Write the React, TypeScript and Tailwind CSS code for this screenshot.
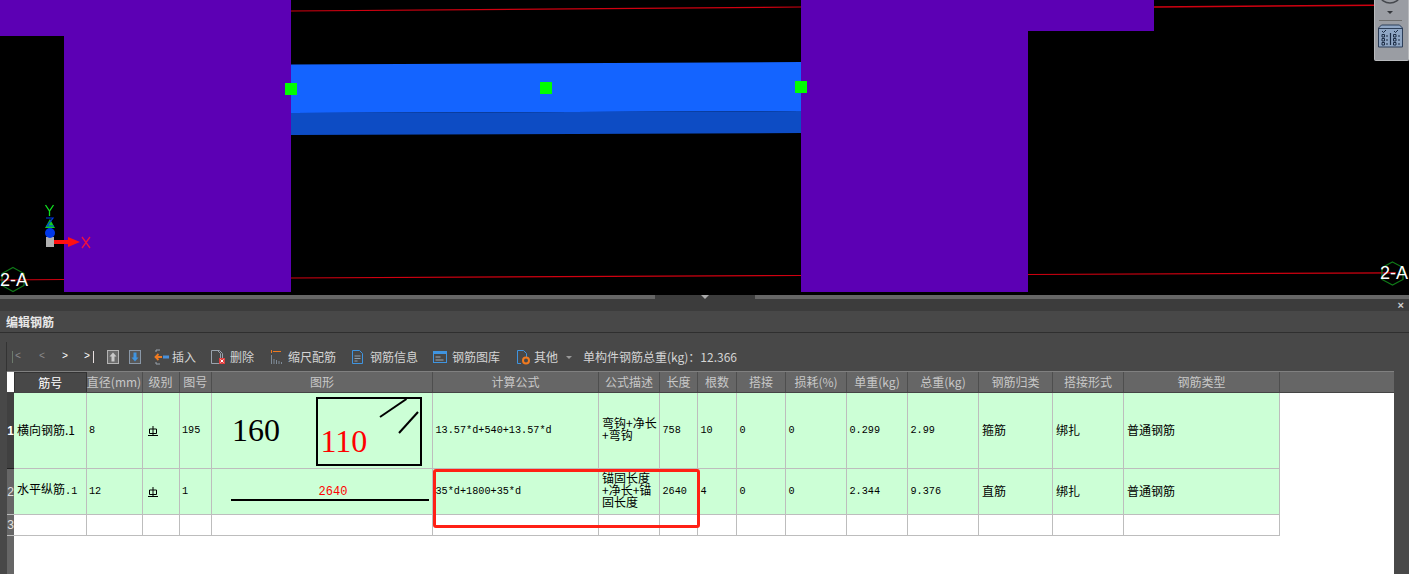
import React from 'react';

const CJK = '[font-family:"Noto_Sans_CJK_SC","Liberation_Sans",sans-serif]';
const GRID =
  'grid grid-cols-[72.5px_56px_37px_32.5px_221px_166px_61px_38px_39px_49px_61px_61px_71px_74px_71px_156px]';

const HEADERS = [
  '筋号', '直径(mm)', '级别', '图号', '图形', '计算公式', '公式描述', '长度', '根数',
  '搭接', '损耗(%)', '单重(kg)', '总重(kg)', '钢筋归类', '搭接形式', '钢筋类型',
];

function Viewport() {
  return (
    <div className="relative h-[295px] shrink-0 bg-black overflow-hidden">
      <svg width="1409" height="295" className="absolute inset-0">
        <line x1="291" y1="11" x2="801" y2="7" stroke="#d00010" strokeWidth="1.2" />
        <line x1="1154" y1="7" x2="1374" y2="5.300" stroke="#d00010" strokeWidth="1.5" />
        <line x1="0" y1="280" x2="64" y2="279.500" stroke="#d00010" strokeWidth="1.2" />
        <line x1="291" y1="278" x2="801" y2="275.500" stroke="#d00010" strokeWidth="1.2" />
        <line x1="1028" y1="274.500" x2="1396" y2="272.800" stroke="#d00010" strokeWidth="1.2" />
        <rect x="0" y="0" width="64" height="36" fill="#5c00b4" />
        <rect x="64" y="0" width="227" height="292" fill="#5c00b4" />
        <rect x="801" y="0" width="227" height="292" fill="#5c00b4" />
        <rect x="1028" y="0" width="126" height="31" fill="#5c00b4" />
        <polygon points="291,64.500 801,62 801,111 291,113" fill="#1464ff" />
        <polygon points="291,113 801,111 801,133 291,135" fill="#0d4cc4" />
        <rect x="285" y="83" width="12" height="12" fill="#00ff00" />
        <rect x="540" y="82" width="12" height="12" fill="#00ff00" />
        <rect x="795" y="81" width="12" height="12" fill="#00ff00" />
        {/* axis marker */}
        <rect x="46" y="237" width="8" height="10" fill="#b0b0b0" />
        <polygon points="50,219 55,228 45,228" fill="#10d020" />
        <circle cx="50" cy="233" r="5" fill="#0038e8" />
        <path d="M46 218h7l-6 8h7" fill="none" stroke="#0038e8" strokeWidth="1.2" />
        <path d="M45.500 205l4 6 4-6M49.500 211v5" fill="none" stroke="#10e020" strokeWidth="1.3" />
        <rect x="54" y="240" width="14" height="4" fill="#ff1010" />
        <polygon points="68,237 80,242 68,247" fill="#ff1010" />
        <path d="M82 237l8 11M90 237l-8 11" fill="none" stroke="#f01040" strokeWidth="1.3" />
        {/* grid bubbles */}
        <polygon points="13,267.500 24,273.500 24,285.500 13,291.500 2,285.500 2,273.500" fill="none" stroke="#107a18" strokeWidth="1.2" />
        <polygon points="1392.500,262 1403,267.500 1403,279.500 1392.500,285 1382,279.500 1382,267.500" fill="none" stroke="#107a18" strokeWidth="1.2" />
      </svg>
      <span className="absolute left-0 top-[269px] text-[18px] leading-[22px] text-white font-['Liberation_Sans']">2-A</span>
      <span className="absolute left-[1380px] top-[262px] text-[18px] leading-[22px] text-white font-['Liberation_Sans']">2-A</span>
      <div className="absolute left-[1374px] top-0 w-[35px] h-[61px] bg-[#9a9da3] rounded-b-[2px] border border-t-0 border-[#b8babd]">
        <svg width="35" height="61" viewBox="0 0 35 61" className="absolute -left-px top-0">
          <path d="M7 -3a9 6 0 0 0 18 0" fill="none" stroke="#45484d" strokeWidth="1.5" />
          <polygon points="13,11 19,11 16,14" fill="#33363b" />
          <line x1="5" y1="20.500" x2="28" y2="20.500" stroke="#6e6e6e" />
          <path d="M4.500 47V28l3-3h18l3 3v19z" fill="#8fa6c4" stroke="#2c3e58" />
          <line x1="4.500" y1="28.500" x2="28.500" y2="28.500" stroke="#2c3e58" />
          <line x1="16.500" y1="33" x2="16.500" y2="45" stroke="#1c2c44" strokeWidth="1.2" />
          <path d="M8 31l1.500 1.500L12 30M20 31l1.500 1.500L24 30" fill="none" stroke="#1c2c44" />
          <path d="M8 34.500h2.500v2.500H8zM8 38.500h2.500V41H8zM8 42.500h2.500V45H8zM19.500 34.500h2.500v2.500h-2.500zM19.500 38.500h2.500V41h-2.500zM19.500 42.500h2.500V45h-2.500z" fill="none" stroke="#1c2c44" />
          <path d="M12 36h2M12 40h2M12 44h2M24 36h2M24 40h2M24 44h2" stroke="#1c2c44" />
        </svg>
      </div>
    </div>
  );
}

function ToolIcon({ name }: { name: string }) {
  if (name === 'insert')
    return (
      <svg width="16" height="16" viewBox="0 0 16 16">
        <path d="M2 3V1h4M2 13v2h4" fill="none" stroke="#9aa3ad" />
        <path d="M8 8H2M4.500 5L1.500 8l3 3" fill="none" stroke="#f07a20" strokeWidth="1.8" />
        <rect x="9" y="6.500" width="6" height="3" fill="#4a90d8" />
      </svg>
    );
  if (name === 'delete')
    return (
      <svg width="16" height="16" viewBox="0 0 16 16">
        <path d="M1.500 1.500h6l3 3v10h-9z" fill="none" stroke="#9aa3ad" />
        <path d="M4.500 1.500h5l3 3v5" fill="none" stroke="#9aa3ad" />
        <rect x="9" y="9" width="6" height="6" fill="#e04040" />
        <path d="M10.500 10.500l3 3M13.500 10.500l-3 3" stroke="#fff" />
      </svg>
    );
  if (name === 'scale')
    return (
      <svg width="16" height="16" viewBox="0 0 16 16">
        <path d="M2.500 1v3M4 2.500h8" stroke="#f07a20" />
        <path d="M2.500 6v9M5 10v5M7.500 11v4M10 12v3M12.500 13v2" stroke="#7f8b98" />
      </svg>
    );
  if (name === 'info')
    return (
      <svg width="16" height="16" viewBox="0 0 16 16">
        <path d="M2.500 1.500h7l3 3v10h-10z" fill="none" stroke="#3f94e0" />
        <path d="M4.500 7h6M4.500 9.500h6M4.500 12h3" stroke="#8fa0b0" />
      </svg>
    );
  if (name === 'lib')
    return (
      <svg width="16" height="16" viewBox="0 0 16 16">
        <rect x="1.500" y="2.500" width="13" height="11" fill="none" stroke="#3f94e0" />
        <rect x="1" y="2" width="14" height="3" fill="#3f94e0" />
        <path d="M3.500 8h5M3.500 11h8" stroke="#a0a8b0" />
      </svg>
    );
  return (
    <svg width="16" height="16" viewBox="0 0 16 16">
      <path d="M2.500 1.500h6l3 3v4M6 14.500H2.500v-13" fill="none" stroke="#3f94e0" />
      <circle cx="11" cy="11.500" r="3" fill="none" stroke="#f07a20" strokeWidth="2" />
    </svg>
  );
}

function ToolButton({ icon, label, className }: { icon: string; label: string; className: string }) {
  return (
    <div className={`flex items-center shrink-0 ${className}`}>
      <ToolIcon name={icon} />
      <span>{label}</span>
    </div>
  );
}

function Toolbar() {
  return (
    <div className={`h-[38px] shrink-0 pl-[6px] flex items-start ${CJK} text-[12px] leading-none text-[#d4d4d4]`}>
      <div className="w-px h-[29px] mt-[9px] bg-[#333]" />
      <div className="flex items-center h-[16px] mt-[16px] font-['Liberation_Mono'] text-[10px] leading-none">
        <span className="ml-[5px] w-px h-[12px] bg-[#6c7a6c]" />
        <span className="ml-[2px] w-[6px] text-[#8a8a8a]">&lt;</span>
        <span className="ml-[18px] w-[6px] text-[#8a8a8a]">&lt;</span>
        <span className="ml-[17px] w-[6px] text-white">&gt;</span>
        <span className="ml-[16px] w-[6px] text-white">&gt;</span>
        <span className="ml-[3px] w-px h-[12px] bg-[#e8e0e0]" />
        <svg width="12" height="14" viewBox="0 0 12 14" className="ml-[13px]">
          <rect x="0.500" y="0.500" width="11" height="13" fill="#6a6a6a" stroke="#b4b4b4" />
          <path d="M6 2.500L2.500 6.500h2v5h3v-5h2z" fill="#c8c8c8" />
        </svg>
        <svg width="12" height="14" viewBox="0 0 12 14" className="ml-[10px]">
          <rect x="0.500" y="0.500" width="11" height="13" fill="#585858" stroke="#8a98a8" />
          <path d="M6 11.500L2.500 7.500h2v-5h3v5h2z" fill="#3f94e0" />
        </svg>
      </div>
      <div className="flex items-center h-[16px] mt-[16px]">
        <ToolButton icon="insert" label="插入" className="ml-[13px] w-[56px] gap-[2px]" />
        <ToolButton icon="delete" label="删除" className="w-[59px] gap-[4px]" />
        <ToolButton icon="scale" label="缩尺配筋" className="w-[81px] gap-[3px]" />
        <ToolButton icon="info" label="钢筋信息" className="w-[82px] gap-[4px]" />
        <ToolButton icon="lib" label="钢筋图库" className="w-[83px] gap-[4px]" />
        <ToolButton icon="other" label="其他" className="w-[51px] gap-[3px]" />
        <span className="w-0 h-0 border-x-[3px] border-t-[3px] border-x-transparent border-t-[#999]" />
        <span className="ml-[11px] whitespace-nowrap">单构件钢筋总重(kg)：12.366</span>
      </div>
    </div>
  );
}

function Cell({ children, className = 'pl-[3px]' }: { children?: React.ReactNode; className?: string }) {
  return (
    <div className={`flex items-center border-r border-b border-[#bdbdbd] text-black text-[12px] leading-[12px] ${CJK} ${className}`}>
      {children}
    </div>
  );
}

function Text({ children }: { children: React.ReactNode }) {
  return <span className="pb-[2px]">{children}</span>;
}

function Num({ children }: { children: React.ReactNode }) {
  return <span className="font-['Liberation_Mono'] text-[10.2px] -ml-[0.5px]">{children}</span>;
}

function GradeMark() {
  return (
    <Cell className="pl-[5px]">
      <svg width="10" height="10" viewBox="0 0 10 10">
        <path d="M1.500 3h7v4.500h-7zM5 0v9M0 9.500h10" fill="none" stroke="#000" />
      </svg>
    </Cell>
  );
}

function RowNo({ n, active, className }: { n: number; active?: boolean; className: string }) {
  return (
    <div
      className={`w-[7px] flex items-center justify-center border-b font-['Liberation_Sans'] text-[12px] ${className} ${
        active ? 'bg-[#404040] border-[#222] text-white font-bold' : 'bg-[#666666] border-[#bdbdbd] text-[#e0e0e0]'
      }`}
    >
      {n}
    </div>
  );
}

function Table() {
  return (
    <div className="flex-1 flex pl-[7px]">
      <div className="w-[1387px] flex flex-col bg-white">
        <div className="h-[22px] shrink-0 flex bg-[#666666] border-t border-[#808080] border-b-[#444] border-b">
          <div className="w-[7px] bg-white" />
          <div className={`${GRID} ${CJK} text-[12px] text-[#c8c8c8]`}>
            {HEADERS.map((h, i) => (
              <div
                key={h}
                className={`flex items-center justify-center border-r border-[#4e4e4e] ${
                  i === 0 ? 'bg-[#484848] text-white border-l border-t border-[#333]' : ''
                }`}
              >
                {h}
              </div>
            ))}
          </div>
        </div>
        <div className="flex">
          <RowNo n={1} active className="h-[76px]" />
          <div className={`${GRID} h-[76px] bg-[#ccffd6]`}>
            <Cell><Text>横向钢筋.1</Text></Cell>
            <Cell><Num>8</Num></Cell>
            <GradeMark />
            <Cell><Num>195</Num></Cell>
            <Cell className="pl-0">
              <div className="relative w-full h-full">
                <span className="absolute left-[20px] top-[19px] font-['Liberation_Serif'] text-[32px] leading-[36px]">160</span>
                <div className="absolute left-[103.500px] top-[4px] w-[106px] h-[69px] border-2 border-black">
                  <svg width="102" height="65" className="absolute inset-0">
                    <line x1="62" y1="18" x2="88.500" y2="0" stroke="#000" strokeWidth="2" />
                    <line x1="81" y1="34" x2="100" y2="13" stroke="#000" strokeWidth="2" />
                  </svg>
                  <span className="absolute left-[3px] top-[24px] font-['Liberation_Serif'] text-[32px] leading-[36px] text-[#ff0000]">110</span>
                </div>
              </div>
            </Cell>
            <Cell><Num>13.57*d+540+13.57*d</Num></Cell>
            <Cell><span className="pb-[3px]">弯钩+净长+弯钩</span></Cell>
            <Cell><Num>758</Num></Cell>
            <Cell><Num>10</Num></Cell>
            <Cell><Num>0</Num></Cell>
            <Cell><Num>0</Num></Cell>
            <Cell><Num>0.299</Num></Cell>
            <Cell><Num>2.99</Num></Cell>
            <Cell><Text>箍筋</Text></Cell>
            <Cell><Text>绑扎</Text></Cell>
            <Cell><Text>普通钢筋</Text></Cell>
          </div>
        </div>
        <div className="flex">
          <RowNo n={2} className="h-[46px]" />
          <div className={`${GRID} h-[46px] bg-[#ccffd6]`}>
            <Cell><Text>水平纵筋<span className="font-['Liberation_Mono'] text-[10.2px]">.1</span></Text></Cell>
            <Cell><Num>12</Num></Cell>
            <GradeMark />
            <Cell><Num>1</Num></Cell>
            <Cell className="pl-0">
              <div className="w-full h-full pl-[18.500px] pr-[3.500px] pt-[14.500px]">
                <div className="h-[15px] pl-[7px] pt-[1px] text-center text-[#ff0000] font-['Liberation_Mono'] text-[12px] leading-[14px]">2640</div>
                <div className="h-[2px] bg-black" />
              </div>
            </Cell>
            <Cell><Num>35*d+1800+35*d</Num></Cell>
            <Cell><span className="pb-[3px]">锚固长度+净长+锚固长度</span></Cell>
            <Cell><Num>2640</Num></Cell>
            <Cell><Num>4</Num></Cell>
            <Cell><Num>0</Num></Cell>
            <Cell><Num>0</Num></Cell>
            <Cell><Num>2.344</Num></Cell>
            <Cell><Num>9.376</Num></Cell>
            <Cell><Text>直筋</Text></Cell>
            <Cell><Text>绑扎</Text></Cell>
            <Cell><Text>普通钢筋</Text></Cell>
          </div>
        </div>
        <div className="flex">
          <RowNo n={3} className="h-[21px]" />
          <div className={`${GRID} h-[21px]`}>
            {HEADERS.map((h) => (
              <Cell key={h} />
            ))}
          </div>
        </div>
        <div className="flex-1 w-[7px] bg-[#666666]" />
      </div>
    </div>
  );
}

export default function App() {
  return (
    <div className="relative w-[1409px] h-[574px] flex flex-col overflow-hidden bg-[#484848]">
      <Viewport />
      <div className="h-[4px] shrink-0 bg-[#666666] flex justify-center">
        <div className="w-[100px] h-full bg-[#3c3c3c] flex justify-center items-center">
          <span className="w-0 h-0 border-x-[4px] border-t-[4px] border-x-transparent border-t-[#aaa]" />
        </div>
      </div>
      <div className="h-[12px] shrink-0 bg-[#3c3c3c] flex justify-end items-center pr-[5px] font-['Liberation_Sans'] text-[11px] font-bold leading-none text-[#cfcfcf]">
        ×
      </div>
      <div className={`h-[22px] shrink-0 bg-[#484848] border-b border-[#2f2f2f] pl-[6px] flex items-center text-[12px] font-bold text-[#e8e8e8] ${CJK}`}>
        编辑钢筋
      </div>
      <Toolbar />
      <Table />
      {/* review mark drawn over the sheet */}
      <div className="absolute left-[433px] top-[469px] w-[267px] h-[59px] border-[3px] border-[#ff2015] rounded-[3px]" />
    </div>
  );
}
